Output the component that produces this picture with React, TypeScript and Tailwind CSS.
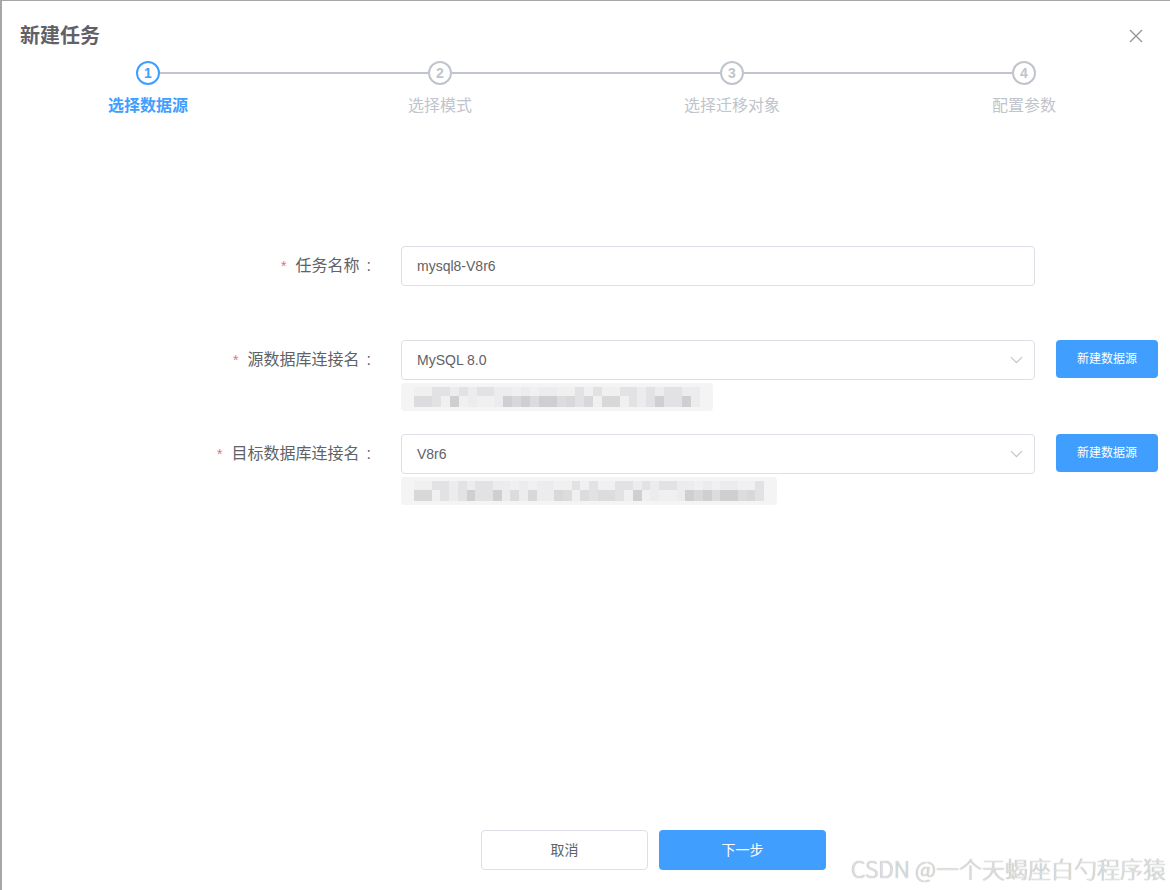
import type React from "react";

const steps = ["选择数据源", "选择模式", "选择迁移对象", "配置参数"];

// shades for the pixelated (redacted) hint row under each select
const shades = [
  "bg-[#ececee]",
  "bg-[#e2e2e4]",
  "bg-[#d8d8da]",
  "bg-[#cfcfd1]",
  "bg-[#f0f0f1]",
  "bg-[#dcdcde]",
];

const cellShade = (seed: number, i: number, dark: boolean) => {
  const n = (seed * 31 + i * 17 + (i * i) % 7) % shades.length;
  if (!dark) return shades[(n + 4) % 3 === 0 ? 4 : n % 3 === 0 ? 0 : 1];
  return shades[n];
};

const Redacted: React.FC<{ width: number; cells: number; seed: number }> = ({
  width,
  cells,
  seed,
}) => (
  <div
    className="mt-[3px] h-[28px] rounded-[4px] bg-[#f4f4f5] px-[13px] pt-[4px]"
    style={{ width }}
  >
    <div className="flex h-[9px]">
      {Array.from({ length: cells }).map((_, i) => (
        <div key={i} className={`h-full w-[9px] ${cellShade(seed, i, false)}`} />
      ))}
    </div>
    <div className="flex h-[11px]">
      {Array.from({ length: cells }).map((_, i) => (
        <div key={i} className={`h-full w-[9px] ${cellShade(seed + 3, i, true)}`} />
      ))}
    </div>
  </div>
);

const Chevron = () => (
  <svg width="13" height="8" viewBox="0 0 13 8" fill="none">
    <path d="M1 1.2l5.5 5.5L12 1.2" stroke="#c0c4cc" strokeWidth="1.2" />
  </svg>
);

const Label: React.FC<{ text: string }> = ({ text }) => (
  <div className="flex h-10 w-[373px] items-center justify-end text-[16px] text-[#606266]">
    <span className="mr-[9px] text-[14px] text-[#f56c6c]">*</span>
    <span>{text}</span>
    <span className="ml-[7px] mr-[4px]">:</span>
  </div>
);

const SelectRow: React.FC<{
  label: string;
  value: string;
  hintWidth: number;
  hintCells: number;
  seed: number;
}> = ({ label, value, hintWidth, hintCells, seed }) => (
  <div className="flex">
    <Label text={label} />
    <div className="ml-[26px]">
      <div className="flex h-10 w-[634px] items-center justify-between rounded-[4px] border border-[#dcdfe6] pl-[15px] pr-[11px] text-[14px] text-[#606266]">
        <span>{value}</span>
        <Chevron />
      </div>
      <Redacted width={hintWidth} cells={hintCells} seed={seed} />
    </div>
    <button className="ml-[21px] h-[38px] w-[102px] rounded-[4px] bg-[#409eff] text-[12px] text-white">
      新建数据源
    </button>
  </div>
);

export default function App() {
  return (
    <div className="relative flex h-[890px] w-full flex-col border-l-2 border-t border-[#a6a6a6] bg-white font-['Liberation_Sans','Noto_Sans_CJK_SC',sans-serif]">
      <div className="flex items-center justify-between pl-[18px] pr-[27px] pt-[23px]">
        <h1 className="text-[20px] font-bold leading-6 text-[#5f6166]">新建任务</h1>
        <svg width="14" height="14" viewBox="0 0 14 14" fill="none">
          <path d="M1 1l12 12M13 1L1 13" stroke="#909399" strokeWidth="1.3" />
        </svg>
      </div>

      <div className="mt-[13px] grid grid-cols-4">
        {steps.map((s, i) => {
          const active = i === 0;
          return (
            <div key={s} className="flex flex-col items-center">
              <div className="flex w-full items-center">
                <div className={`h-[2px] flex-1 ${i === 0 ? "" : "bg-[#c0c4cc]"}`} />
                <div
                  className={`flex h-6 w-6 items-center justify-center rounded-full border-2 text-[14px] font-bold ${
                    active ? "border-[#409eff] text-[#409eff]" : "border-[#c0c4cc] text-[#c0c4cc]"
                  }`}
                >
                  {i + 1}
                </div>
                <div className={`h-[2px] flex-1 ${i === 3 ? "" : "bg-[#c0c4cc]"}`} />
              </div>
              <div
                className={`mt-[9px] text-[16px] leading-6 ${
                  active ? "font-bold text-[#409eff]" : "text-[#c0c4cc]"
                }`}
              >
                {s}
              </div>
            </div>
          );
        })}
      </div>

      <div className="mt-[128px] flex flex-col">
        <div className="flex">
          <Label text="任务名称" />
          <div className="ml-[26px] flex h-10 w-[634px] items-center rounded-[4px] border border-[#dcdfe6] px-[15px] text-[14px] text-[#606266]">
            mysql8-V8r6
          </div>
        </div>
        <div className="mt-[54px]">
          <SelectRow label="源数据库连接名" value="MySQL 8.0" hintWidth={312} hintCells={32} seed={2} />
        </div>
        <div className="mt-[23px]">
          <SelectRow label="目标数据库连接名" value="V8r6" hintWidth={376} hintCells={40} seed={5} />
        </div>
      </div>

      <div className="mt-auto flex gap-[11px] pb-[20px] pl-[479px]">
        <button className="h-[40px] w-[167px] rounded-[4px] border border-[#dcdfe6] bg-white text-[14px] text-[#606266]">
          取消
        </button>
        <button className="h-[40px] w-[167px] rounded-[4px] bg-[#409eff] text-[14px] text-white">
          下一步
        </button>
      </div>

      <div className="absolute bottom-[5px] right-[4px] font-['Noto_Sans_CJK_SC',sans-serif] text-[23px] font-light text-[#e2e2e2] [text-shadow:0_0_1px_rgba(0,0,0,0.45)]">
        CSDN @一个天蝎座白勺程序猿
      </div>
    </div>
  );
}
